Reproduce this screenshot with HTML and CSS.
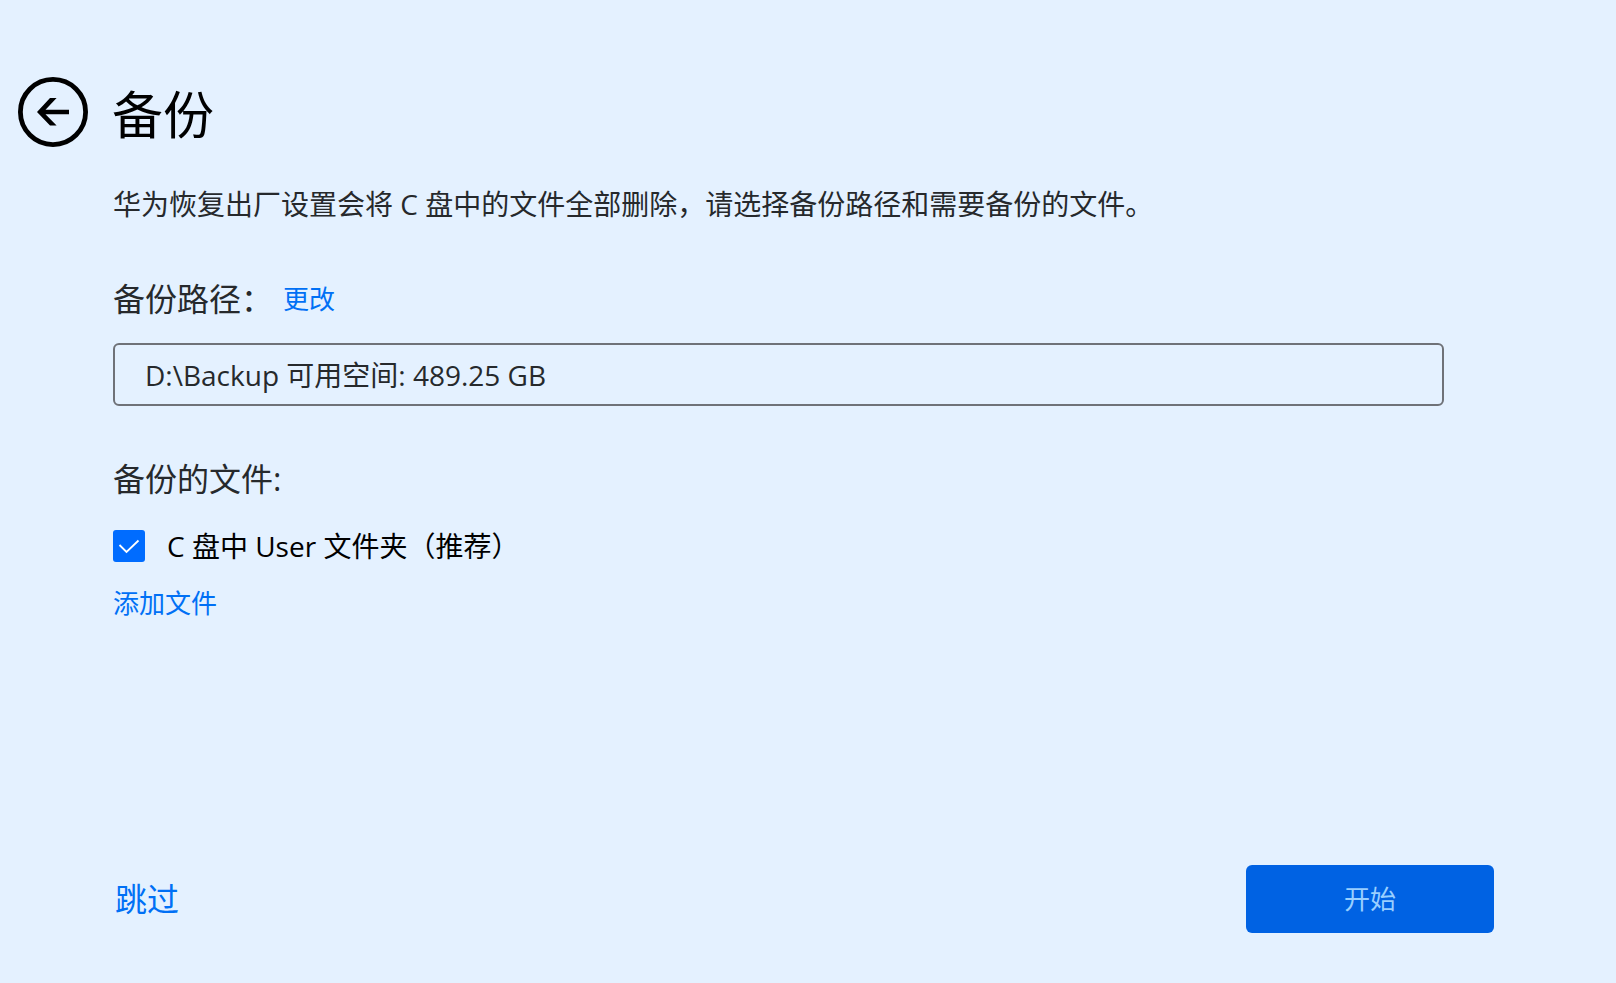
FILE: index.html
```html
<!DOCTYPE html>
<html lang="zh-CN">
<head>
    <meta charset="UTF-8">
    <meta name="viewport" content="width=device-width, initial-scale=1.0">
    <title>备份</title>
    <link rel="stylesheet" href="styles.css">
</head>
<body>
    <header class="header">
        <button class="back-btn" type="button" aria-label="返回">
            <svg viewBox="0 0 70 70" width="70" height="70">
                <circle cx="35" cy="35" r="32.6" fill="none" stroke="#000" stroke-width="4.8"/>
                <path d="M19 35 L32 21 H38.6 L27.5 32.8 H51 V37.2 H27.5 L38.6 48.5 H32 Z" fill="#000"/>
            </svg>
        </button>
        <h1>备份</h1>
    </header>

    <main class="content">
        <p class="description">华为恢复出厂设置会将 C 盘中的文件全部删除，请选择备份路径和需要备份的文件。</p>

        <div class="path-row">
            <label class="section-label" for="path">备份路径：</label>
            <a class="link" href="#">更改</a>
        </div>
        <input class="path-box" id="path" type="text" value="D:\Backup 可用空间: 489.25 GB" readonly>

        <h2 class="section-label files-label">备份的文件:</h2>
        <div class="file-row">
            <input class="checkbox" id="user-folder" type="checkbox" checked>
            <label for="user-folder">C 盘中 User 文件夹（推荐）</label>
        </div>
        <a class="link add-link" href="#">添加文件</a>
    </main>

    <footer class="footer">
        <a class="skip-link" href="#">跳过</a>
        <button class="start-btn" type="button">开始</button>
    </footer>
</body>
</html>
```
FILE: styles.css
```css
* {
    margin: 0;
    padding: 0;
    box-sizing: border-box;
}

body {
    min-height: 100vh;
    display: flex;
    flex-direction: column;
    background: #e4f1ff;
    color: #26292c;
    font-family: "Open Sans", "Noto Sans CJK SC", sans-serif;
    font-size: 28px;
    line-height: 40px;
}

a {
    color: #0070f5;
    text-decoration: none;
}

.header {
    display: flex;
    align-items: center;
    gap: 24px;
    padding: 77px 18px 0;
}

.back-btn {
    width: 70px;
    height: 70px;
    border: none;
    border-radius: 50%;
    background: none;
    cursor: pointer;
}

.back-btn svg {
    display: block;
}

h1 {
    padding-top: 4px;
    color: #000;
    font-size: 51px;
    font-weight: 400;
    line-height: 66px;
}

.content {
    flex: 1;
    padding: 37px 172px 0 113px;
}

.path-row {
    display: flex;
    align-items: center;
    gap: 10px;
    margin-top: 51px;
}

.section-label {
    font-size: 32px;
    font-weight: 400;
    line-height: 48px;
}

.link {
    font-size: 26px;
}

.path-box {
    display: block;
    width: 100%;
    height: 63px;
    margin-top: 20px;
    padding: 0 30px 2px;
    border: 2px solid #6f7278;
    border-radius: 6px;
    background: none;
    color: inherit;
    font: inherit;
}

.files-label {
    margin-top: 49px;
}

.file-row {
    display: flex;
    align-items: center;
    gap: 22px;
    margin-top: 23px;
    color: #000;
}

.checkbox {
    appearance: none;
    width: 32px;
    height: 32px;
    border-radius: 3px;
    background: #006cff url("data:image/svg+xml,%3Csvg xmlns='http://www.w3.org/2000/svg' viewBox='0 0 32 32'%3E%3Cpath d='M6.5 15 L13.5 22 L25.5 10.5' fill='none' stroke='%23fff' stroke-width='1.8'/%3E%3C/svg%3E") center / 32px no-repeat;
}

.add-link {
    display: inline-block;
    margin-top: 17px;
}

.footer {
    display: flex;
    align-items: center;
    justify-content: space-between;
    padding: 0 122px 50px 115px;
}

.skip-link {
    font-size: 32px;
}

.start-btn {
    width: 248px;
    height: 68px;
    border: none;
    border-radius: 6px;
    background: #0062e3;
    color: #99cfff;
    font: inherit;
    font-size: 26px;
    cursor: pointer;
}
```
